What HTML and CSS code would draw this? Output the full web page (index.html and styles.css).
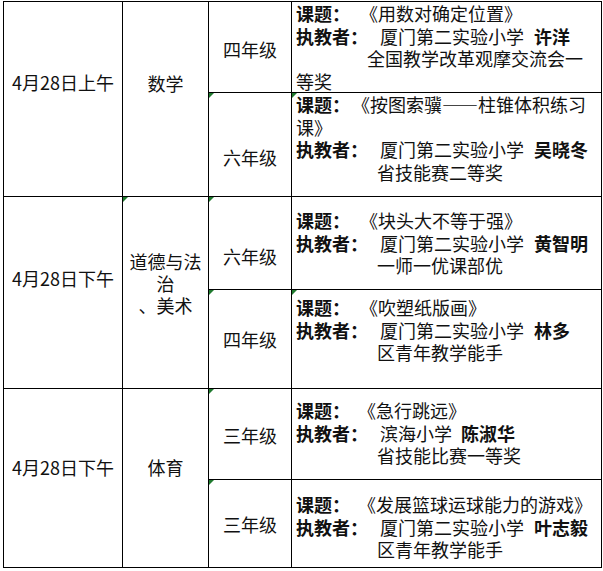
FILE: index.html
```html
<!DOCTYPE html>
<html lang="zh-CN">
<head>
<meta charset="utf-8">
<title>课程安排</title>
<link rel="stylesheet" href="styles.css">
</head>
<body>
<div class="sheet">
  <div class="cell date date-1">4月28日上午</div>
  <div class="cell subject subject-1">数学</div>
  <div class="cell grade grade-1">四年级</div>
  <div class="cell info info-1">
    <div class="line"><b class="label">课题：</b><span class="title">《用数对确定位置》</span></div>
    <div class="line"><b class="label">执教者：</b><span class="school">厦门第二实验小学</span><b class="name">许洋</b></div>
    <div class="line"><span class="award award-wide">全国教学改革观摩交流会一</span></div>
    <div class="line">等奖</div>
  </div>

  <div class="cell grade grade-2 flag">六年级</div>
  <div class="cell info info-2 flag">
    <div class="line"><b class="label">课题：</b><span class="title title-tight">《按图索骥——柱锥体积练习</span></div>
    <div class="line">课》</div>
    <div class="line"><b class="label">执教者：</b><span class="school">厦门第二实验小学</span><b class="name">吴晓冬</b></div>
    <div class="line"><span class="award">省技能赛二等奖</span></div>
  </div>

  <div class="cell date date-2">4月28日下午</div>
  <div class="cell subject subject-2 flag">道德与法<br>治<br>、美术</div>
  <div class="cell grade grade-3 flag">六年级</div>
  <div class="cell info info-3">
    <div class="line"><b class="label">课题：</b><span class="title">《块头大不等于强》</span></div>
    <div class="line"><b class="label">执教者：</b><span class="school">厦门第二实验小学</span><b class="name">黄智明</b></div>
    <div class="line"><span class="award">一师一优课部优</span></div>
  </div>

  <div class="cell grade grade-4 flag">四年级</div>
  <div class="cell info info-4 flag">
    <div class="line"><b class="label">课题：</b><span class="title">《吹塑纸版画》</span></div>
    <div class="line"><b class="label">执教者：</b><span class="school">厦门第二实验小学</span><b class="name">林多</b></div>
    <div class="line"><span class="award">区青年教学能手</span></div>
  </div>

  <div class="cell date date-3">4月28日下午</div>
  <div class="cell subject subject-3">体育</div>
  <div class="cell grade grade-5 flag">三年级</div>
  <div class="cell info info-5">
    <div class="line"><b class="label">课题：</b><span class="title title-mid">《急行跳远》</span></div>
    <div class="line"><b class="label">执教者：</b><span class="school">滨海小学</span><b class="name name-near">陈淑华</b></div>
    <div class="line"><span class="award">省技能比赛一等奖</span></div>
  </div>

  <div class="cell grade grade-6 flag">三年级</div>
  <div class="cell info info-6">
    <div class="line"><b class="label">课题：</b><span class="title title-mid">《发展篮球运球能力的游戏》</span></div>
    <div class="line"><b class="label">执教者：</b><span class="school">厦门第二实验小学</span><b class="name">叶志毅</b></div>
    <div class="line"><span class="award">区青年教学能手</span></div>
  </div>
</div>
</body>
</html>
```

FILE: styles.css
```css
html, body {
  margin: 0;
  padding: 0;
  background: #ffffff;
}

body {
  font-family: "Noto Sans CJK SC", "Noto Sans", sans-serif;
  font-size: 18px;
  color: #111111;
}

.sheet {
  display: grid;
  grid-template-columns: 118px 85px 82px 309px;
  grid-template-rows: 90px 103px 92px 98px 90px 87px;
  gap: 1px;
  padding: 1px;
  margin: 1px 0 0 3px;
  width: max-content;
  background: #000000;
}

.cell {
  position: relative;
  background: #ffffff;
  line-height: 22.5px;
}

.flag::before {
  content: "";
  position: absolute;
  top: 0;
  left: 0;
  border-top: 5px solid #1f7a2e;
  border-right: 5px solid transparent;
}

/* date column */
.date {
  grid-column: 1;
  text-align: center;
  padding-top: 69px;
}
.date-1 { grid-row: 1 / 3; padding-top: 69px; }
.date-2 { grid-row: 3 / 5; padding-top: 70px; }
.date-3 { grid-row: 5 / 7; padding-top: 67px; }

/* subject column */
.subject {
  grid-column: 2;
  text-align: center;
  line-height: 22px;
}
.subject-1 { grid-row: 1 / 3; padding-top: 70px; }
.subject-2 { grid-row: 3 / 5; padding-top: 53px; }
.subject-3 { grid-row: 5 / 7; padding-top: 67px; }

/* grade column */
.grade {
  grid-column: 3;
  display: flex;
  align-items: center;
  justify-content: center;
}
.grade-1 { grid-row: 1; padding-top: 4px; }
.grade-2 { grid-row: 2; padding-top: 25px; }
.grade-3 { grid-row: 3; padding-top: 27px; }
.grade-4 { grid-row: 4; padding-top: 1px; }
.grade-5 { grid-row: 5; padding-top: 2px; }
.grade-6 { grid-row: 6; padding-top: 2px; }

/* info column */
.info {
  grid-column: 4;
  padding-left: 4px;
}
.info-1 { grid-row: 1; padding-top: 0; }
.info-2 { grid-row: 2; padding-top: 0; }
.info-3 { grid-row: 3; padding-top: 12px; }
.info-4 { grid-row: 4; padding-top: 6px; }
.info-5 { grid-row: 5; padding-top: 10px; }
.info-6 { grid-row: 6; padding-top: 13px; }

.line {
  white-space: nowrap;
}

.label {
  font-weight: 700;
}

.title {
  margin-left: 19px;
}
.title-tight { margin-left: 11px; }
.title-mid { margin-left: 17px; }

.school {
  margin-left: 12px;
}

.name {
  font-weight: 700;
  margin-left: 10px;
}
.name-near { margin-left: 9px; }

.award {
  margin-left: 81px;
}
.award-wide {
  margin-left: 71px;
}
```
